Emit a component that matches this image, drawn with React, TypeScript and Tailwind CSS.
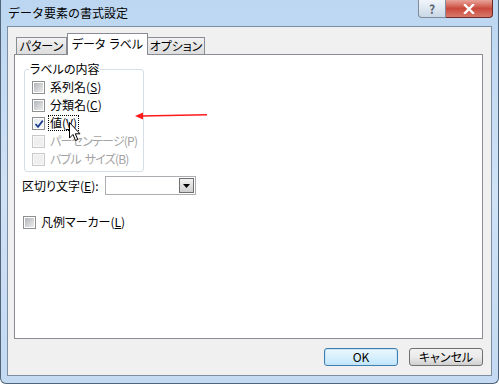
import React from 'react';

const font = { fontFamily: '"Noto Sans CJK JP", "Noto Sans", sans-serif' };

function Box({ checked, disabled }: { checked?: boolean; disabled?: boolean }) {
  return (
    <span
      className={`relative flex h-[13px] w-[13px] shrink-0 items-center justify-center border ${
        disabled ? 'border-[#c9c9c9] bg-[#f7f7f7]' : 'border-[#8e8f8f] bg-white'
      }`}
    >
      <span
        className={`h-[9px] w-[9px] ${
          disabled
            ? 'bg-[#efefef]'
            : checked
            ? 'bg-gradient-to-br from-[#e3e9ef] to-[#fafafa]'
            : 'bg-gradient-to-br from-[#b2b6bb] to-[#ececec]'
        }`}
      />
      {checked && (
        <svg className="absolute left-[1px] top-[1px]" width="10" height="10" viewBox="0 0 10 10">
          <path d="M1.5 5 L4 7.8 L8.8 1.6" fill="none" stroke="#1f3f93" strokeWidth="1.8" />
        </svg>
      )}
    </span>
  );
}

function Row({
  label,
  acc,
  checked,
  disabled,
  focus,
}: {
  label: React.ReactNode;
  acc: string;
  checked?: boolean;
  disabled?: boolean;
  focus?: boolean;
}) {
  return (
    <div className="flex h-[18px] items-center gap-[4px]">
      <Box checked={checked} disabled={disabled} />
      <span
        className={`whitespace-nowrap px-[1px] text-[12px] leading-[14px] ${
          disabled ? 'tracking-[-0.8px] text-[#a3a3a3]' : 'text-black'
        } ${focus ? 'outline outline-1 outline-dotted outline-black' : ''}`}
      >
        {label}(
        <span className={disabled ? '' : 'underline underline-offset-1'}>{acc}</span>)
      </span>
    </div>
  );
}

const Gap = () => <span className="inline-block w-[4px]" />;

export default function App() {
  return (
    <div
      className="relative flex h-[384px] w-[499px] flex-col overflow-hidden rounded-b-[6px] border-x border-b border-[#50647a] bg-gradient-to-b from-[#bcd6f1] via-[#cfe2f6] to-[#c3daf2]"
      style={font}
    >
      {/* title bar */}
      <div className="flex h-[26px] shrink-0 items-start justify-between">
        <span className="ml-[7px] mt-[5px] text-[12px] leading-[16px] text-black">データ要素の書式設定</span>
        <div className="mr-[5px] flex">
          <div className="flex h-[18px] w-[28px] items-center justify-center rounded-bl-[4px] border border-t-0 border-[#7f8c9b] bg-gradient-to-b from-[#f1f5fa] via-[#dde7f1] to-[#c9d7e6] text-[12px] font-bold leading-none text-[#5a6470]">
            ?
          </div>
          <div className="flex h-[18px] w-[47px] items-center justify-center rounded-br-[4px] border border-l-0 border-t-0 border-[#6d2b2b] bg-gradient-to-b from-[#e8a39a] via-[#c9493c] to-[#d8776a]">
            <svg width="12" height="10" viewBox="0 0 12 10">
              <path d="M2 1 L10 9 M10 1 L2 9" stroke="#ffffff" strokeWidth="2.4" strokeLinecap="square" />
            </svg>
          </div>
        </div>
      </div>

      {/* client area */}
      <div className="mx-[6px] flex h-[350px] flex-col border border-[#7d8ea1] bg-[#f0f0f0] pl-[6px] pr-[8px] pt-[6px] [font-feature-settings:'palt']">
        {/* tabs */}
        <div className="flex h-[21px] items-end pl-[2px]">
          <div className="flex h-[17px] w-[51px] items-center justify-center whitespace-nowrap border border-b-0 border-[#898c95] bg-gradient-to-b from-[#f2f2f2] to-[#dcdcdc] text-[12px] leading-none">
            パターン
          </div>
          <div className="relative z-10 -mb-px flex h-[22px] w-[81px] items-start justify-center whitespace-nowrap border border-b-0 border-[#898c95] bg-white pt-[3px] text-[12px] leading-[14px]">
            データ<Gap />ラベル
          </div>
          <div className="flex h-[17px] w-[57px] items-center justify-center whitespace-nowrap border border-b-0 border-l-0 border-[#898c95] bg-gradient-to-b from-[#f2f2f2] to-[#dcdcdc] text-[12px] leading-none">
            オプション
          </div>
        </div>

        {/* panel */}
        <div className="relative flex h-[285px] flex-col border border-[#898c95] bg-white">
          {/* group box */}
          <div className="relative ml-[9px] mt-[14px] flex h-[103px] w-[120px] flex-col rounded-[3px] border border-[#d5dfe5] pl-[7px] pt-[8px]">
            <span className="absolute left-[4px] top-[-8px] bg-white px-[1px] text-[12px] leading-[14px]">ラベルの内容</span>
            <Row label="系列名" acc="S" />
            <Row label="分類名" acc="C" />
            <Row label="値" acc="V" checked focus />
            <Row label="パーセンテージ" acc="P" disabled />
            <Row label={<>バブル<Gap />サイズ</>} acc="B" disabled />
          </div>

          {/* separator */}
          <div className="ml-[7px] mt-[4px] flex h-[19px] items-center">
            <span className="w-[83px] text-[12px] leading-[14px]">
              区切り文字(<span className="underline underline-offset-1">E</span>):
            </span>
            <div className="flex h-[19px] w-[91px] items-stretch border border-[#abadb3] bg-white">
              <div className="flex-1" />
              <div className="my-[1px] mr-[1px] flex w-[15px] items-center justify-center border border-[#707070] bg-gradient-to-b from-[#f2f2f2] to-[#cfcfcf]">
                <svg width="7" height="4" viewBox="0 0 7 4">
                  <path d="M0 0 H7 L3.5 4 Z" fill="#000" />
                </svg>
              </div>
            </div>
          </div>

          {/* legend marker */}
          <div className="ml-[8px] mt-[18px]">
            <Row label="凡例マーカー" acc="L" />
          </div>

          {/* red arrow */}
          <svg className="absolute left-[118px] top-[55px]" width="76" height="12" viewBox="0 0 76 12">
            <path d="M8 6 L74 4.8" stroke="#ff1a1a" strokeWidth="1.6" />
            <path d="M2 6 L10 2.5 L10 9.5 Z" fill="#ff1a1a" />
          </svg>

          {/* mouse cursor */}
          <svg className="absolute left-[54px] top-[67px]" width="13" height="21" viewBox="0 0 13 21">
            <path
              d="M0.5 0.5 L0.5 16 L4 12.5 L6.5 18.5 L8.8 17.5 L6.3 11.8 L11 11.8 Z"
              fill="#ffffff"
              stroke="#000000"
              strokeWidth="1"
            />
          </svg>
        </div>

        {/* buttons */}
        <div className="mt-[9px] flex justify-end gap-[11px]">
          <button className="flex h-[18px] w-[74px] items-center justify-center rounded-[3px] border border-[#3c7fb1] bg-gradient-to-b from-[#eaf6fd] via-[#d9f0fc] to-[#bee6fd] text-[12px] leading-none shadow-[inset_0_0_0_1px_#c6e4f6]">
            OK
          </button>
          <button className="flex h-[18px] w-[74px] items-center justify-center rounded-[3px] border border-[#707070] bg-gradient-to-b from-[#f2f2f2] via-[#ebebeb] to-[#cfcfcf] text-[12px] leading-none">
            キャンセル
          </button>
        </div>
      </div>
    </div>
  );
}
